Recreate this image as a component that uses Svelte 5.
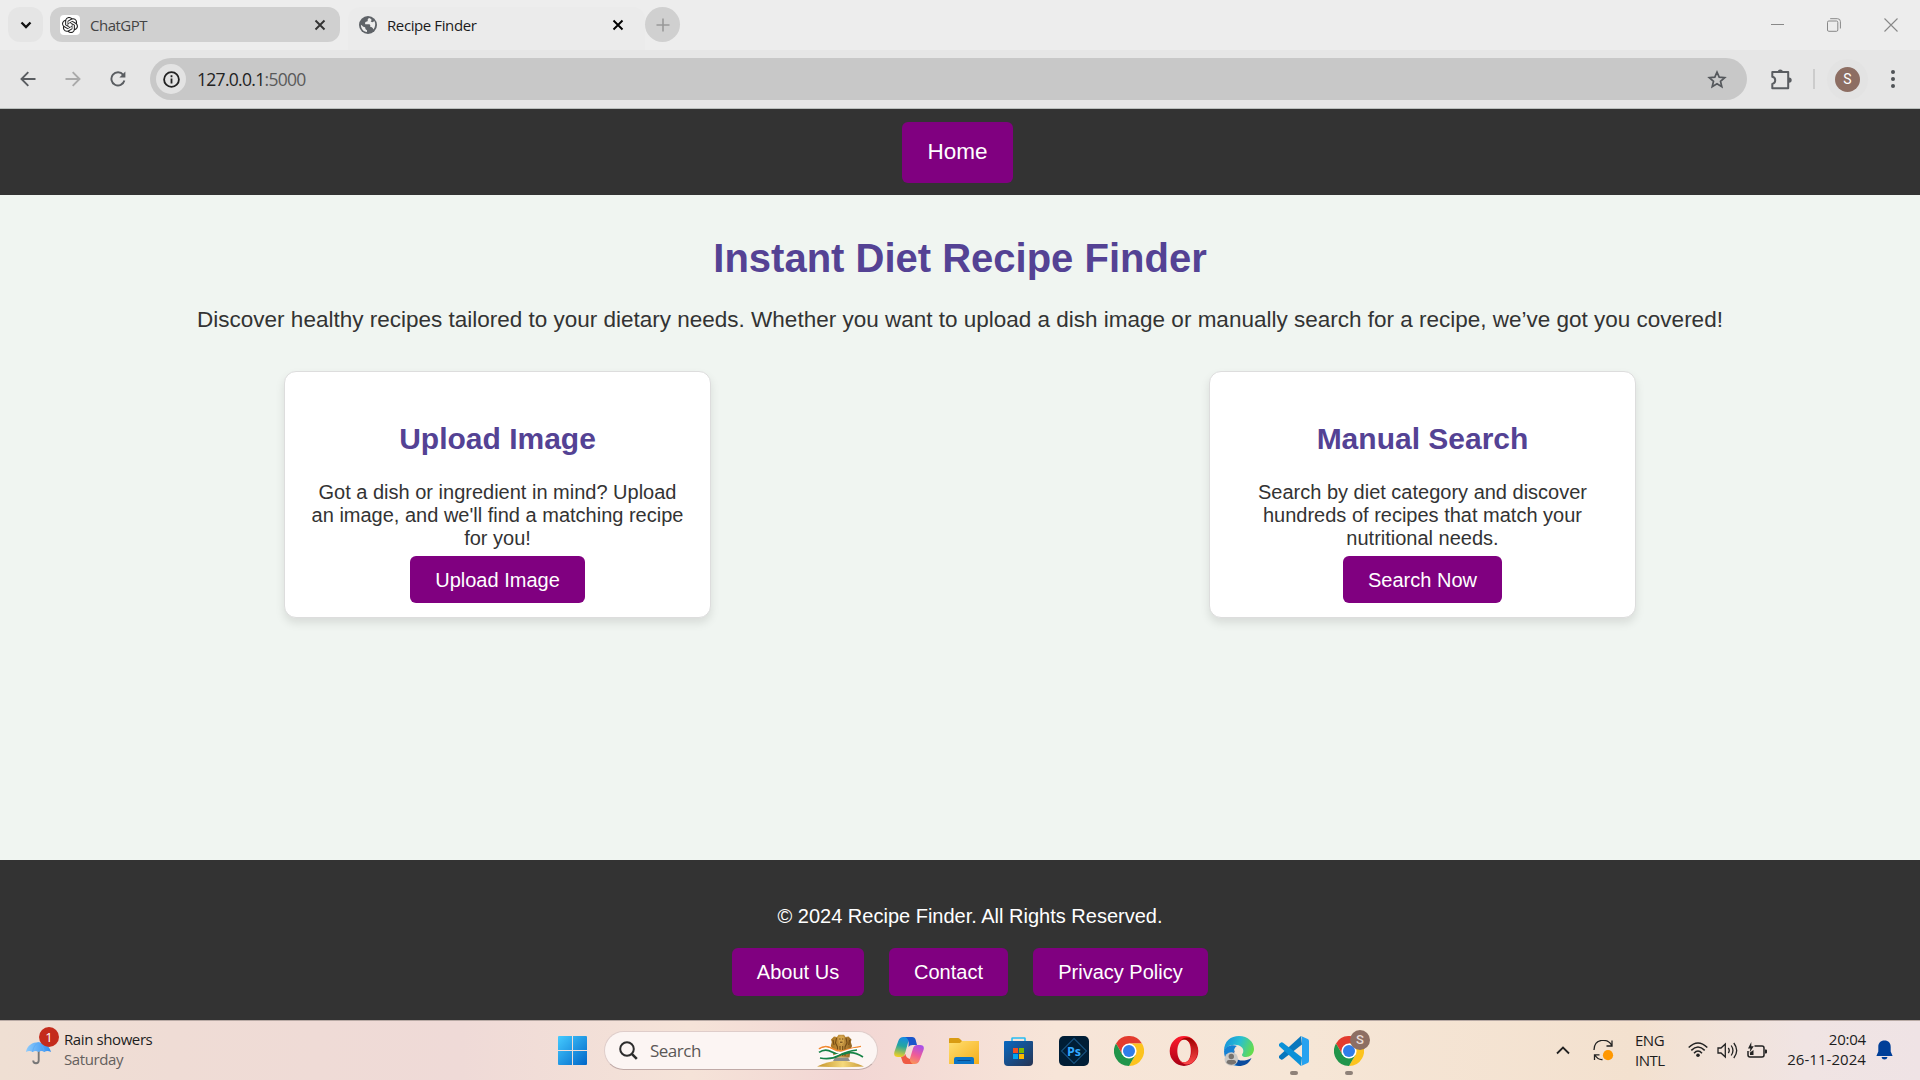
<script>
  const cards = [
    {
      title: 'Upload Image',
      lines: ['Got a dish or ingredient in mind? Upload', "an image, and we'll find a matching recipe", 'for you!'],
      action: 'Upload Image',
      kind: 'upload'
    },
    {
      title: 'Manual Search',
      lines: ['Search by diet category and discover', 'hundreds of recipes that match your', 'nutritional needs.'],
      action: 'Search Now',
      kind: 'search'
    }
  ];
</script>

{#snippet chromeLogo()}
  <svg width="30" height="30" viewBox="0 0 30 30">
    <path d="M2 7.5 A15 15 0 0 1 28 7.5 H15 L8.5 18.7 Z" fill="#e33b2e" />
    <path d="M28 7.5 A15 15 0 0 1 15 30 L21.5 18.7 L15 7.5 Z" fill="#fcc31e" />
    <path d="M2 7.5 A15 15 0 0 0 15 30 L21.5 18.7 L8.5 18.7 Z" fill="#21954a" />
    <circle cx="15" cy="15" r="7.6" fill="#fff" />
    <circle cx="15" cy="15" r="6" fill="#2f7de9" />
  </svg>
{/snippet}

<div class="screen">
  <div class="tabs">
    <div class="tab-menu">
      <svg width="12" height="8" viewBox="0 0 12 8"><path d="M1.5 1.5 L6 6 L10.5 1.5" fill="none" stroke="#111" stroke-width="2.3" /></svg>
    </div>
    <div class="tab idle">
      <span class="favicon">
        <svg width="16" height="16" viewBox="0 0 24 24" fill="#222">
          <path d="M22.28 9.82a5.98 5.98 0 0 0-.52-4.91 6.05 6.05 0 0 0-6.51-2.9A6.07 6.07 0 0 0 4.98 4.18a5.98 5.98 0 0 0-4 2.9 6.05 6.05 0 0 0 .74 7.1 5.98 5.98 0 0 0 .51 4.91 6.05 6.05 0 0 0 6.51 2.9A5.98 5.98 0 0 0 13.26 24a6.06 6.06 0 0 0 5.77-4.21 5.99 5.99 0 0 0 4-2.9 6.06 6.06 0 0 0-.75-7.07zM13.26 22.43a4.48 4.48 0 0 1-2.88-1.04l.14-.08 4.78-2.76a.79.79 0 0 0 .39-.68v-6.74l2.02 1.17.04.05v5.58a4.5 4.5 0 0 1-4.49 4.5zM3.6 18.3a4.47 4.47 0 0 1-.53-3.01l.14.08 4.78 2.76a.77.77 0 0 0 .78 0l5.84-3.37v2.33l-.03.06-4.83 2.79a4.5 4.5 0 0 1-6.15-1.64zM2.34 7.9A4.48 4.48 0 0 1 4.7 5.92V11.6a.77.77 0 0 0 .39.68l5.81 3.35-2.02 1.17h-.07l-4.83-2.79A4.5 4.5 0 0 1 2.34 7.87zM18.94 11.75 13.1 8.36l2.02-1.16h.07l4.83 2.79a4.49 4.49 0 0 1-.68 8.1v-5.68a.79.79 0 0 0-.4-.66zM20.95 8.73l-.14-.09-4.77-2.78a.78.78 0 0 0-.79 0L9.41 9.23V6.9l.03-.06 4.83-2.79a4.5 4.5 0 0 1 6.68 4.66zM8.31 12.86l-2.02-1.16-.04-.06V6.07a4.5 4.5 0 0 1 7.38-3.45l-.14.08-4.78 2.76a.79.79 0 0 0-.39.68zM9.4 10.5 12 9l2.61 1.5v3L12 15l-2.6-1.5z" fill-rule="evenodd" />
        </svg>
      </span>
      <span class="tab-title">ChatGPT</span>
      <svg class="close" width="12" height="12" viewBox="0 0 12 12"><path d="M1.5 1.5 L10.5 10.5 M10.5 1.5 L1.5 10.5" stroke="#333" stroke-width="1.9" /></svg>
    </div>
    <div class="tab active">
      <svg width="18" height="18" viewBox="0 0 18 18">
        <circle cx="9" cy="9" r="9" fill="#5f6368" />
        <path d="M10.2 1.9 C7.4 3 9.8 4.7 8 5.6 C6.3 6 5.8 6.3 6.2 8.2 H10 C11.5 8.2 11.5 9.8 11 10.8 C12.5 10.6 13.6 11.6 14.5 13.4 C16.5 10.7 16.7 7.7 15.4 5.1 C14 6.5 12.9 6.5 11.7 5.2 C13.3 4.4 12.7 2.6 10.2 1.9 Z M1.9 8.7 C1.9 12.7 4.4 15.6 8 16.1 V14.2 C5.9 13.5 6.5 12 6.1 11.2 C4.4 11.2 3.5 9.8 1.9 8.7 Z" fill="#ededed" />
      </svg>
      <span class="tab-title">Recipe Finder</span>
      <svg class="close" width="12" height="12" viewBox="0 0 12 12"><path d="M1.5 1.5 L10.5 10.5 M10.5 1.5 L1.5 10.5" stroke="#000" stroke-width="1.9" /></svg>
    </div>
    <div class="new-tab">
      <svg width="14" height="14" viewBox="0 0 14 14"><path d="M7 .5 V13.5 M.5 7 H13.5" stroke="#999" stroke-width="1.6" /></svg>
    </div>
    <div class="window-controls">
      <svg width="13" height="13" viewBox="0 0 13 13"><path d="M0 6.5 H13" stroke="#888" stroke-width="1" /></svg>
      <svg width="14" height="14" viewBox="0 0 14 14" fill="none" stroke="#888"><rect x=".5" y="3" width="10.3" height="10.3" rx="1.3" /><path d="M3.2 .7 H10.5 Q13.4 .7 13.4 3.6 V10.5" /></svg>
      <svg width="14" height="14" viewBox="0 0 14 14"><path d="M.5 .5 L13.5 13.5 M13.5 .5 L.5 13.5" stroke="#888" stroke-width="1.1" /></svg>
    </div>
  </div>

  <div class="toolbar">
    <div class="nav-icons">
      <svg width="16" height="16" viewBox="0 0 16 16" fill="none" stroke="#5a5d61" stroke-width="1.9"><path d="M15.5 8 H2 M8.3 1.2 L1.5 8 L8.3 14.8" /></svg>
      <svg width="16" height="16" viewBox="0 0 16 16" fill="none" stroke="#aaa" stroke-width="1.9"><path d="M.5 8 H14 M7.7 1.2 L14.5 8 L7.7 14.8" /></svg>
      <svg width="16" height="16" viewBox="0 0 16 16"><path d="M13.2 3.8 A6.6 6.6 0 1 0 14.4 9.6" fill="none" stroke="#5a5d61" stroke-width="1.9" /><path d="M15.4 .6 V6.6 H9.4 Z" fill="#5a5d61" /></svg>
    </div>
    <div class="address">
      <span class="info">
        <svg width="17" height="17" viewBox="0 0 17 17"><circle cx="8.5" cy="8.5" r="7.4" fill="none" stroke="#222" stroke-width="1.8" /><path d="M8.5 7.5 V12.5 M8.5 4.3 V6.2" stroke="#222" stroke-width="1.8" /></svg>
      </span>
      <span class="url">127.0.0.1<span>:5000</span></span>
      <svg class="star" width="20" height="19" viewBox="0 0 20 19"><path d="M10 2.2 L12.2 7.2 L17.7 7.7 L13.5 11.3 L14.8 16.8 L10 13.8 L5.2 16.8 L6.5 11.3 L2.3 7.7 L7.8 7.2 Z" fill="none" stroke="#55585c" stroke-width="1.7" /></svg>
    </div>
    <svg class="puzzle" width="21" height="21" viewBox="0 0 21 21"><path d="M1.3 3.1 H17.2 V19.3 H1.3 V14.9 C5.2 14.1 5.2 8.5 1.3 7.7 Z" fill="none" stroke="#5a5d61" stroke-width="2" stroke-linejoin="round" /><path d="M6.7 2.6 A2.7 2.7 0 0 1 12 2.6 Z M18 8.4 A2.7 2.7 0 0 1 18 13.8 Z" fill="#5a5d61" /></svg>
    <i class="divider"></i>
    <span class="avatar-ring"><span class="avatar">S</span></span>
    <svg class="dots" width="4" height="18" viewBox="0 0 4 18" fill="#505357"><circle cx="2" cy="2" r="2" /><circle cx="2" cy="9" r="2" /><circle cx="2" cy="16" r="2" /></svg>
  </div>

  <nav class="site-nav"><a class="home" href="#home">Home</a></nav>

  <main>
    <h1>Instant Diet Recipe Finder</h1>
    <p class="intro">Discover healthy recipes tailored to your dietary needs. Whether you want to upload a dish image or manually search for a recipe, we’ve got you covered!</p>
    <section class="cards">
      {#each cards as card}
        <article class="card">
          <h2>{card.title}</h2>
          <p>{#each card.lines as line}<span>{line}</span>{/each}</p>
          <a class="action {card.kind}" href="#{card.kind}">{card.action}</a>
        </article>
      {/each}
    </section>
  </main>

  <footer>
    <p>© 2024 Recipe Finder. All Rights Reserved.</p>
    <div class="links">
      <a class="about" href="#about">About Us</a>
      <a class="contact" href="#contact">Contact</a>
      <a class="privacy" href="#privacy">Privacy Policy</a>
    </div>
  </footer>

  <div class="taskbar">
    <div class="weather">
      <div class="umbrella">
        <svg width="26" height="28" viewBox="0 0 26 28">
          <defs><linearGradient id="umb" x1="0" x2="1"><stop offset="0" stop-color="#8fcbfb" /><stop offset="1" stop-color="#2f8df0" /></linearGradient></defs>
          <path d="M12.7 12 V22.5 Q12.7 25.2 10 25.2 Q7.2 25.2 7.2 22.5" fill="none" stroke="#777" stroke-width="1.9" />
          <path d="M0 14 C2 1 22 1 25 14 Q21 11.8 18.4 14 Q15.5 11.8 12.5 14 Q9.5 11.8 6.6 14 Q3.5 11.8 0 14 Z" fill="url(#umb)" />
          <path d="M6.6 14 Q7.5 7 12.5 4.5 Q17 7 18.4 14" fill="none" stroke="#5aabf6" stroke-width=".8" />
        </svg>
        <b>1</b>
      </div>
      <div class="forecast"><span class="rain">Rain showers</span><span class="day">Saturday</span></div>
    </div>

    <div class="apps">
      <svg class="win" width="29" height="29" viewBox="0 0 29 29">
        <defs><linearGradient id="win" x1="0" y1="0" x2="1" y2="1"><stop offset="0" stop-color="#45cbff" /><stop offset="1" stop-color="#0066c8" /></linearGradient></defs>
        <path d="M1 0 H14 V14 H0 V1 Q0 0 1 0 Z M15 0 H28 Q29 0 29 1 V14 H15 Z M0 15 H14 V29 H1 Q0 29 0 28 Z M15 15 H29 V28 Q29 29 28 29 H15 Z" fill="url(#win)" />
      </svg>
      <div class="search-box">
        <svg width="19" height="19" viewBox="0 0 19 19" fill="none" stroke="#2c2c2c"><circle cx="8" cy="8" r="6.8" stroke-width="2" /><path d="M12.8 12.8 L17.8 17.8" stroke-width="2.6" /></svg>
        <span>Search</span>
        <svg class="emblem" width="48" height="34" viewBox="0 0 48 34">
          <defs>
            <linearGradient id="sand" x1="0" x2="1"><stop offset="0" stop-color="#c49228" /><stop offset=".55" stop-color="#f5d97c" /><stop offset="1" stop-color="#c79833" /></linearGradient>
            <linearGradient id="lion" x1="0" x2="1"><stop offset="0" stop-color="#a8731f" /><stop offset=".5" stop-color="#c99a47" /><stop offset="1" stop-color="#8d5f1c" /></linearGradient>
          </defs>
          <path d="M0 32.5 Q23 21 47 32.5 Q24 34 0 32.5 Z" fill="url(#sand)" />
          <path d="M16 27 L18 23.5 H31 L33 27 Z" fill="#8e8e8b" />
          <path d="M14 5.5 L17 2.5 L20 3 L21.5 .8 H27 L28.5 3 L31.5 2.5 L34.5 5.5 L33.8 8 L35 12 L33.5 16 L32.5 23.5 H16.5 L15.8 16 L13.8 12 L14.8 8 Z" fill="url(#lion)" />
          <path d="M19.5 4 L18.5 9 L20.5 13 V22 M29 4 L30 9 L28 13 V22 M23 12 V22 M25.7 12 V22 M16 6 L17 11 M32.5 6 L31.8 11" fill="none" stroke="#744b16" stroke-width="1.1" />
          <path d="M21.3 3 Q24.2 1 27.3 3 L26.8 8.5 L24.2 11 L21.8 8.5 Z" fill="#d6a64c" />
          <path d="M22.3 5 H23.5 M25.1 5 H26.3 M23 8.2 H25.5" stroke="#5d3c14" />
          <g fill="none" stroke-width="1.7">
            <path d="M2 15 Q8 10.5 15 14.5 T29 16 T44 12.5" stroke="#f18a32" />
            <path d="M2 16.7 Q8 12.2 15 16.2 T29 17.7 T44 14.2" stroke="#fff" />
            <path d="M2 18.4 Q8 13.9 15 17.9 T29 19.4 T46 23" stroke="#168246" />
            <path d="M3 22.5 Q14 24.5 22 20 T40 14.5" stroke="#fff" />
            <path d="M3 24 Q14 26 22 21.5 T40 16" stroke="#168246" />
          </g>
        </svg>
      </div>
      <svg class="copilot" width="30" height="28" viewBox="0 0 30 28">
        <defs>
          <linearGradient id="cop1" x1=".5" y1="0" x2=".3" y2="1"><stop offset="0" stop-color="#168be6" /><stop offset=".45" stop-color="#24a6a0" /><stop offset="1" stop-color="#f3cf22" /></linearGradient>
          <linearGradient id="cop2" x1=".7" y1="0" x2=".3" y2="1"><stop offset="0" stop-color="#a950e8" /><stop offset=".5" stop-color="#ef5b98" /><stop offset="1" stop-color="#fb9d50" /></linearGradient>
        </defs>
        <path d="M14 0 H9.5 Q5.5 0 4.3 4 L.5 14.5 Q-1 20 4 20 H7 Q10 20 11 16.5 L14.5 4 Q15.3 0 19 0 Z" fill="url(#cop1)" />
        <path d="M11 0 H18 Q21 0 21.7 3 L23 8 H18.5 Q15.5 8 14.5 10 Q15.5 1 11 0 Z" fill="#1955cb" />
        <path d="M16 27 H20.5 Q24.5 27 25.7 23 L29.5 13 Q31 8 26 8 H23 Q20 8 19 11.5 L15.5 23 Q14.5 27 11 27 Z" fill="url(#cop2)" />
        <path d="M19 27 H12 Q9 27 8.3 24 L7 20 Q10 20.4 11.4 17 Q12 21 16 22 Q15.5 25 19 27 Z" fill="#ef5a43" />
      </svg>
      <svg class="folder" width="30" height="28" viewBox="0 0 30 28">
        <defs><linearGradient id="fold" x1="0" y1="0" x2="1" y2="1"><stop offset="0" stop-color="#ffdf72" /><stop offset="1" stop-color="#f6ae19" /></linearGradient></defs>
        <path d="M0 2 Q0 1 1 1 H9 Q10 1 11 2 L13 4 H29 V10 H0 Z" fill="#d99b12" />
        <path d="M0 6 H11 L13 4 H30 V27 H0 Z" fill="url(#fold)" />
        <path d="M5 27 V22 Q5 20 7 20 H23 Q25 20 25 22 V27 Z" fill="#0c74c6" /><path d="M8.5 23.5 H21.5" stroke="#064b8d" />
      </svg>
      <svg class="store" width="29" height="30" viewBox="0 0 29 30">
        <defs><linearGradient id="sto" x1="0" y1="0" x2="1" y2="1"><stop offset="0" stop-color="#0868c1" /><stop offset="1" stop-color="#283452" /></linearGradient></defs>
        <path d="M8 6 V2.5 Q8 2 8.5 2 H20.5 Q21 2 21 2.5 V6" fill="none" stroke="#27bdf3" stroke-width="1.6" />
        <path d="M1 5 H28 Q29 5 29 6 V26 Q29 30 25 30 H4 Q0 30 0 26 V6 Q0 5 1 5 Z" fill="url(#sto)" />
        <path d="M9 12 H14 V17 H9 Z" fill="#f25022" /><path d="M15 12 H20 V17 H15 Z" fill="#7fba00" /><path d="M9 18 H14 V23 H9 Z" fill="#00a4ef" /><path d="M15 18 H20 V23 H15 Z" fill="#ffb900" />
      </svg>
      <svg class="ps" width="30" height="30" viewBox="0 0 30 30">
        <rect width="30" height="30" rx="5" fill="#001e36" /><path d="M15 2.5 L27.5 15 L15 27.5 L2.5 15 Z" fill="none" stroke="#16517f" stroke-width="1.1" />
        <text x="15" y="19.5" text-anchor="middle" font-size="12.5" font-weight="700" fill="#31a8ff">Ps</text>
      </svg>
      <span class="chrome">{@render chromeLogo()}</span>
      <svg class="opera" width="30" height="30" viewBox="0 0 30 30">
        <defs><linearGradient id="op" x1="0" y1="0" x2="0" y2="1"><stop offset="0" stop-color="#ff1b2d" /><stop offset="1" stop-color="#a70014" /></linearGradient><linearGradient id="op2" x1="0" y1="0" x2="0" y2="1"><stop offset="0" stop-color="#9c0000" /><stop offset="1" stop-color="#ff4b4b" /></linearGradient></defs>
        <path fill-rule="evenodd" d="M15 0 A14.3 15 0 0 0 15 30 A14.3 15 0 0 0 15 0 M15.5 3.5 C6 4 6 26 15.5 26.5 C24 26.5 24 3.5 15.5 3.5 Z" fill="url(#op)" />
        <path d="M10 6 Q16 -1 23 3 A14.3 15 0 0 1 23 27 Q16 31 10 24 Q14 28 18.5 25 C24.5 20 24 8 18.5 4.7 Q14 2 10 6 Z" fill="url(#op2)" />
      </svg>
      <svg class="edge" width="30" height="30" viewBox="0 0 30 30">
        <defs><linearGradient id="ed" x1="0" y1=".2" x2="1" y2=".5"><stop offset="0" stop-color="#168fdc" /><stop offset=".5" stop-color="#28bfd2" /><stop offset="1" stop-color="#65dc4d" /></linearGradient></defs>
        <path d="M0 15 C0 5 7 0 15 0 C24 0 30 6 30 13 C30 18 26 21 22 21 C18 21 17 19 19 17 C21 11 14 8 9 9 C5 9 2 12 0 15 Z" fill="url(#ed)" />
        <path d="M0 15 C2 10 8 8 13 10 C8 12 8 25 20 26 L15 30 C6 30 0 24 0 15 Z" fill="#1681d4" />
        <path d="M11 14 C7 23 17 28 27.5 22 C25 28 20 30 15 30 C8 29 6 19 11 14 Z" fill="#0b4c9e" />
        <circle cx="7.3" cy="23" r="6.8" fill="#cbc9c6" /><circle cx="7.3" cy="20.5" r="2.7" fill="#77736f" /><path d="M2.5 27 Q2.5 24 5 24 H9.6 Q12.2 24 12.2 27 Q7.3 30.5 2.5 27 Z" fill="#77736f" />
      </svg>
      <span class="running vscode">
        <svg width="30" height="30" viewBox="0 0 30 30">
          <path d="M22 0 L0 20 Q-1 21 0 22 L2 23.5 Q3 24 4 23.3 L23 8.5 Z" fill="#0877bd" /><path d="M22 30 L0 10 Q-1 9 0 8 L2 6.5 Q3 6 4 6.7 L23 21.5 Z" fill="#0b91d8" />
          <path d="M22 0 L28.7 3 Q30 3.7 30 5 V25 Q30 26.3 28.7 27 L22 30 Q23 29 23 27 V3 Q23 1 22 0 Z" fill="#26a2f0" />
        </svg>
      </span>
      <span class="running profile">{@render chromeLogo()}<b>S</b></span>
    </div>

    <div class="tray">
      <svg class="chevron" width="14" height="9" viewBox="0 0 14 9"><path d="M1 7.5 L7 1.5 L13 7.5" fill="none" stroke="#222" stroke-width="1.8" /></svg>
      <svg class="sync" width="21" height="21" viewBox="0 0 21 21"><path d="M1 10 C1 -1.5 15 -2.5 18.8 5.5 M19 .5 V6 H13.5 M1.5 20 V14.8 H6.5 M1.8 15 Q5 20 9.5 19.5" fill="none" stroke="#222" stroke-width="1.3" /><circle cx="15" cy="15.2" r="5.1" fill="#ff9800" /></svg>
      <div class="language"><span>ENG</span><span>INTL</span></div>
      <svg class="wifi" width="20" height="16" viewBox="0 0 20 16" fill="none" stroke="#222" stroke-width="1.5"><path d="M.7 5.5 Q10 -3.5 19.3 5.5 M3.3 8.4 Q10 1.7 16.7 8.4 M6 11.2 Q10 7 14 11.2" /><circle cx="10" cy="13.2" r="1.8" fill="#222" stroke="none" /></svg>
      <svg class="sound" width="21" height="17" viewBox="0 0 21 17" fill="none" stroke="#222" stroke-width="1.3"><path d="M1 6 H4 L8.3 2 V15 L4 11 H1 Z M11.3 6 Q13.2 8.5 11.3 11 M14.2 3.5 Q17.7 8.5 14.2 13.5 M16.8 1 Q22.6 8.5 16.8 16" /></svg>
      <svg class="battery" width="21" height="17" viewBox="0 0 21 17"><path d="M7.5 4 H15 Q17 4 17 6 V13 Q17 15 15 15 H3 Q1 15 1 13 V9" fill="none" stroke="#222" stroke-width="1.5" /><path d="M18 7.5 H19 Q20 7.5 20 8.5 V10.5 Q20 11.5 19 11.5 H18 Z M4.3 0 L1 6.4 H3.4 L2.6 10.5 L6.8 4.2 H4.3 Z M3 13 V10.5 L6.5 8 V13 Z" fill="#222" /></svg>
      <div class="clock"><span class="time">20:04</span><span class="date">26-11-2024</span></div>
      <svg class="bell" width="17" height="20" viewBox="0 0 17 20"><path d="M8.5 .5 C4.5 .5 2.3 3 2.3 7 V11.5 L.4 16 H16.6 L14.7 11.5 V7 C14.7 3 12.5 .5 8.5 .5 Z M5.5 17 H11.5 Q11 19.5 8.5 19.5 Q6 19.5 5.5 17 Z" fill="#003f98" /></svg>
    </div>
  </div>
</div>

<style>
  :global(body) { margin: 0; overflow: hidden; }
  .screen, .screen * { box-sizing: border-box; }
  .screen { width: 1920px; height: 1080px; display: flex; flex-direction: column; background: #f0f5f1; font-family: "Liberation Sans", Arial, sans-serif; color: #333; }
  svg { display: block; flex: none; }
  a { color: #fff; text-decoration: none; }
  h1, h2, p { margin: 0; }

  .tabs { height: 50px; flex: none; display: flex; align-items: flex-start; padding: 7px 22px 0 8px; background: #ededed; font-family: "Open Sans", "Noto Sans", sans-serif; }
  .tab-menu { width: 35px; height: 35px; margin: 0 7px 0 0; border-radius: 12px; background: #e5e5e5; display: grid; place-items: center; }
  .tab { display: flex; align-items: center; }
  .idle { width: 290px; height: 35px; border-radius: 12px; background: #d0d0d0; padding: 0 14px 0 10px; }
  .favicon { width: 20px; height: 20px; border-radius: 4px; background: #fff; display: grid; place-items: center; }
  .idle .tab-title { margin-left: 10px; color: #444; }
  .tab-title { font-size: 15px; line-height: 20px; letter-spacing: -.5px; color: #1b1b1b; white-space: nowrap; }
  .active { width: 297px; height: 43px; margin-left: 8px; padding: 0 21px 8px 11px; background: #ebebeb; border-radius: 12px 12px 0 0; }
  .active .tab-title { margin-left: 10px; letter-spacing: -.4px; }
  .close { margin-left: auto; }
  .new-tab { width: 35px; height: 35px; border-radius: 50%; background: #d0d0d0; display: grid; place-items: center; }
  .window-controls { margin: 10px 0 0 auto; width: 127px; display: flex; align-items: center; justify-content: space-between; height: 15px; }

  .toolbar { height: 59px; flex: none; display: flex; align-items: center; padding: 0 25px 0 20px; background: #e6e6e6; border-bottom: 1px solid #b9bebc; }
  .nav-icons { display: flex; gap: 29px; width: 130px; }
  .address { width: 1597px; height: 42px; border-radius: 21px; background: #c8c8c8; display: flex; align-items: center; padding: 0 20px 0 6px; }
  .info { width: 30px; height: 30px; border-radius: 50%; background: #e3e3e3; display: grid; place-items: center; }
  .url { margin-left: 11px; font: 17.5px/24px "Open Sans", "Noto Sans", sans-serif; letter-spacing: -.7px; color: #222; }
  .url span { color: #5a5a5a; }
  .star { margin-left: auto; }
  .puzzle { margin-left: 24px; }
  .divider { width: 2px; height: 20px; margin-left: 21px; background: #ccc; }
  .avatar-ring { width: 41px; height: 41px; margin-left: 12px; border-radius: 50%; background: #e3e3e3; display: grid; place-items: center; }
  .avatar { width: 25px; height: 25px; border-radius: 50%; background: #8d6e63; color: #fff; font: 14px/25px Roboto, sans-serif; text-align: center; }
  .dots { margin-left: auto; }

  .site-nav { height: 86px; flex: none; background: #333; display: flex; justify-content: center; padding: 13px 5px 0 0; }
  .home { width: 111px; height: 61px; border-radius: 6px; background: purple; display: grid; place-items: center; font-size: 22.5px; padding-bottom: 2px; }

  main { height: 665px; flex: none; padding-top: 40px; text-align: center; }
  h1 { font-size: 40px; line-height: 46px; color: #544294; }
  .intro { margin-top: 25px; font-size: 22.5px; line-height: 28px; white-space: nowrap; }
  .cards { margin-top: 37px; padding: 0 284px; display: flex; justify-content: space-between; }
  .card { width: 427px; height: 247px; padding: 49px 20px 0; border: 1px solid #ddd; border-radius: 12px; background: #fff; box-shadow: 0 5px 10px rgba(0, 0, 0, .1); display: flex; flex-direction: column; align-items: center; }
  h2 { font-size: 30px; line-height: 36px; color: #544294; }
  .card p { margin-top: 24px; font-size: 20px; line-height: 23px; }
  .card p span { display: block; white-space: nowrap; }
  .action { height: 47px; margin-top: 6px; border-radius: 6px; background: purple; font-size: 20px; line-height: 48px; }
  .upload { width: 175px; }
  .search { width: 159px; }

  footer { height: 160px; flex: none; padding: 44px 0 0 20px; background: #333; color: #fff; text-align: center; }
  footer p { font-size: 20px; line-height: 24px; }
  .links { display: flex; gap: 25px; justify-content: center; margin-top: 20px; }
  .links a { height: 48px; border-radius: 6px; background: purple; font-size: 20px; line-height: 48px; }
  .about { width: 132px; }
  .contact { width: 119px; }
  .privacy { width: 175px; }

  .taskbar { height: 60px; flex: none; display: flex; border-top: 1px solid #b8aaa5; background: linear-gradient(90deg, #efdfd3 0, #efdcd5 9%, #efdad7 24%, #f5e3d8 36%, #f2d6d4 44%, #f7e5d8 55%, #f6e6d6 68%, #f3e1cf 85%, #f0e4e3 94%, #efe3e5 100%); font-family: "Open Sans", "Noto Sans", sans-serif; color: #1d1d1d; }
  .weather { width: 558px; display: flex; padding: 6px 0 0 26px; }
  .umbrella { width: 38px; height: 40px; position: relative; padding-top: 11px; }
  .umbrella b { position: absolute; left: 13px; top: 0; width: 20px; height: 20px; border-radius: 50%; background: #c42b1c; color: #fff; font: 13px/20px "Open Sans", sans-serif; text-align: center; }
  .forecast { display: flex; flex-direction: column; font-size: 15px; line-height: 20px; padding-top: 2px; letter-spacing: -.4px; white-space: nowrap; }
  .day { color: #64605d; }
  .apps { width: 1000px; display: flex; align-items: center; height: 59px; }
  .search-box { width: 274px; height: 39px; margin-left: 17px; padding: 0 12px 0 14px; border-radius: 20px; border: 1px solid #dfcdca; border-bottom-color: #c0aaa7; background: #fcf5f3; display: flex; align-items: center; }
  .search-box span { margin-left: 12px; font-size: 17px; letter-spacing: -.5px; color: #5b5756; }
  .emblem { margin-left: auto; }
  .copilot { margin-left: 16px; }
  .folder { margin-left: 25px; }
  .store { margin-left: 25px; }
  .ps { margin-left: 26px; }
  .chrome, .opera, .edge, .vscode, .profile { margin-left: 25px; }
  .running { position: relative; }
  .running::after { content: ''; position: absolute; width: 8px; height: 4px; border-radius: 2px; left: 11px; top: 35px; background: #8e8178; }
  .profile b { position: absolute; left: 16px; top: -6px; width: 20px; height: 20px; border-radius: 50%; background: #8d6e63; color: #e9dcd7; font: 500 13px/20px Roboto, sans-serif; text-align: center; }
  .tray { flex: 1; display: flex; align-items: center; height: 58px; }
  .chevron { margin-left: -2px; }
  .sync { margin-left: 23px; }
  .language { width: 32px; margin-left: 21px; display: flex; flex-direction: column; font-size: 15px; line-height: 20px; letter-spacing: -.5px; }
  .wifi { margin-left: 21px; }
  .sound { margin-left: 9px; }
  .battery { margin-left: 9px; }
  .clock { width: 80px; margin-left: 18px; display: flex; flex-direction: column; align-items: flex-end; font-size: 15px; line-height: 20px; white-space: nowrap; padding-bottom: 2px; }
  .time { letter-spacing: -.2px; }
  .date { letter-spacing: .05px; }
  .bell { margin-left: 10px; }
</style>
